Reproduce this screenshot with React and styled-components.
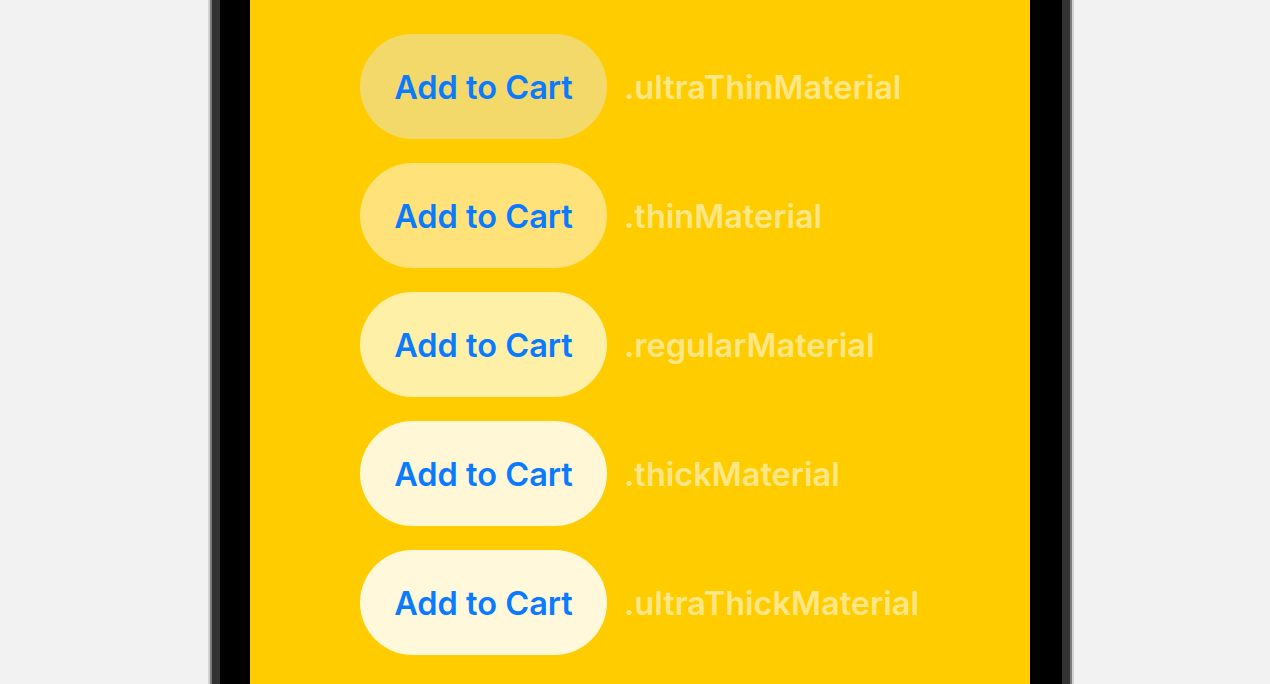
import React from 'react';
import styled, { createGlobalStyle } from 'styled-components';

const GlobalStyle = createGlobalStyle`
  html, body {
    margin: 0;
    padding: 0;
    background: #f2f2f2;
    overflow: hidden;
  }
  body {
    font-family: Inter, "Noto Sans", "Liberation Sans", sans-serif;
  }
`;

const Page = styled.div`
  display: flex;
  justify-content: center;
  height: 684px;
  padding-left: 12px;
`;

const Case = styled.div`
  display: flex;
  padding: 0 2px;
  background: #d2d2d2;
`;

const Rim = styled.div`
  display: flex;
  padding: 0 2px;
  background: #7c7c7c;
`;

const Band = styled.div`
  display: flex;
  padding: 0 8px;
  background: #323232;
`;

const Bezel = styled.div`
  display: flex;
  padding: 0 32px 0 30px;
  background: #000;
`;

const Screen = styled.div`
  width: 780px;
  height: 684px;
  background: #ffcc00;
  display: flex;
  flex-direction: column;
  gap: 24.5px;
  padding: 34px 0 0 110px;
  box-sizing: border-box;
`;

const Row = styled.div`
  display: flex;
  align-items: center;
  gap: 17px;
`;

const CartButton = styled.button`
  width: 247px;
  height: 104.5px;
  border: none;
  border-radius: 53px;
  background: ${p => p.$tint};
  color: #0a7aff;
  font-family: Inter, "Noto Sans", "Liberation Sans", sans-serif;
  font-size: 32.5px;
  font-weight: 560;
  padding: 2px 0 0;
  cursor: pointer;
`;

const Label = styled.span`
  color: #ffe787;
  font-size: 32.5px;
  font-weight: 560;
  padding-top: 2px;
`;

const materials = [
  { name: '.ultraThinMaterial', tint: '#f3d86a' },
  { name: '.thinMaterial', tint: '#ffe27a' },
  { name: '.regularMaterial', tint: '#fff0a8' },
  { name: '.thickMaterial', tint: '#fff7d5' },
  { name: '.ultraThickMaterial', tint: '#fff8da' },
];

const App = () => (
  <>
    <GlobalStyle />
    <Page>
      <Case>
        <Rim>
          <Band>
            <Bezel>
              <Screen>
                {materials.map(m => (
                  <Row key={m.name}>
                    <CartButton $tint={m.tint}>Add to Cart</CartButton>
                    <Label>{m.name}</Label>
                  </Row>
                ))}
              </Screen>
            </Bezel>
          </Band>
        </Rim>
      </Case>
    </Page>
  </>
);

export default App;
